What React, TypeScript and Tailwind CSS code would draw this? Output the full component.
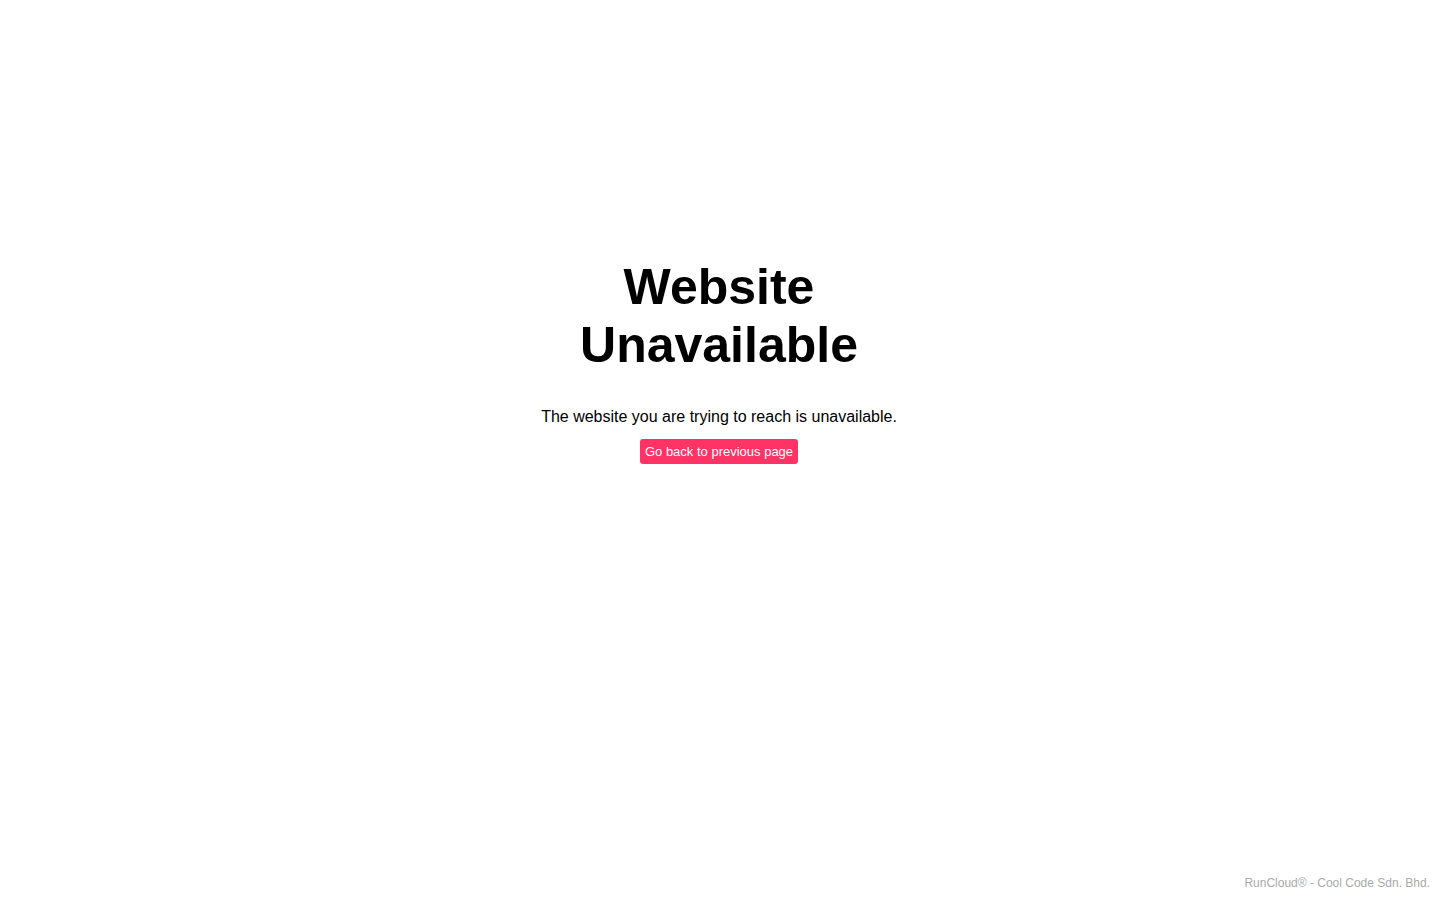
const App = () => {
  return (
    <div className="min-h-screen flex flex-col bg-white text-black font-['Liberation_Sans',Arial,sans-serif]">
      <main className="flex-1 pt-[258px] pr-[2px] text-center">
        <h1 className="w-[300px] mx-auto text-[50px] leading-[58px] font-bold">
          Website Unavailable
        </h1>
        <p className="mt-[34px] text-[16px] leading-[18.4px]">
          The website you are trying to reach is unavailable.
        </p>
        <button
          type="button"
          className="mt-[13px] inline-block px-[5px] py-[5px] text-[13px] leading-[15px] bg-[#ff3366] text-white rounded-[3px]"
        >
          Go back to previous page
        </button>
      </main>
      <footer className="flex justify-end px-[10px] pb-[10px]">
        <span className="text-[12px] leading-[14px] text-[#aaaaaa]">RunCloud® - Cool Code Sdn. Bhd.</span>
      </footer>
    </div>
  );
};

export default App;
